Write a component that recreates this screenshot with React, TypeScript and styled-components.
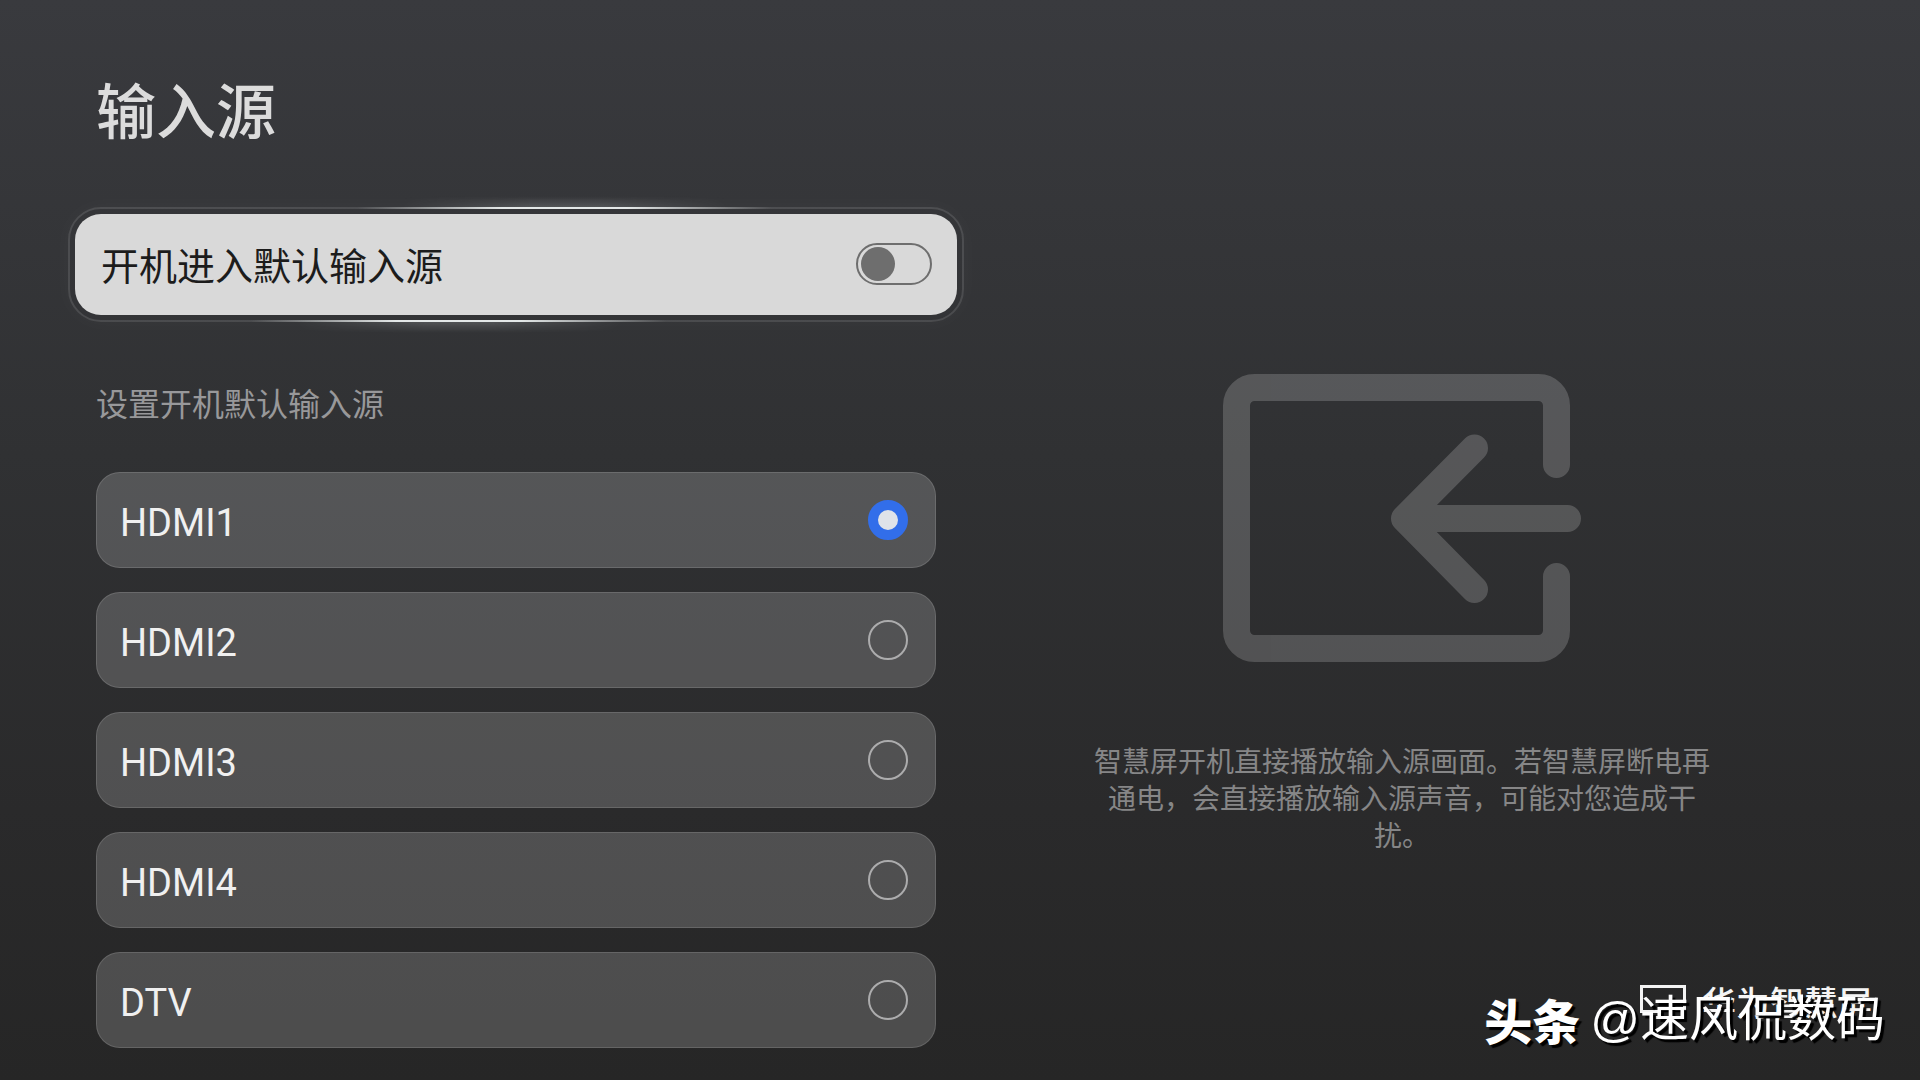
import React, { useState } from "react";
import styled, { createGlobalStyle, css } from "styled-components";

const GlobalStyle = createGlobalStyle`
  *, *::before, *::after { box-sizing: border-box; }
  body {
    margin: 0;
    background: #272727;
    font-family: "Noto Sans CJK SC", "Noto Sans", sans-serif;
  }
`;

const Screen = styled.main`
  position: relative;
  display: grid;
  grid-template-columns: 840fr 932fr;
  min-height: 100vh;
  padding: 68px 52px 32px 96px;
  background: linear-gradient(180deg, #393a3e 0%, #303133 42%, #2a2a2b 75%, #262626 100%);
`;

const Settings = styled.section`
  display: flex;
  flex-direction: column;
`;

const Title = styled.h1`
  margin: 0 0 66px;
  font-size: 60px;
  line-height: 80px;
  font-weight: 500;
  color: #dcdcdc;
`;

const FocusedRow = styled.label`
  position: relative;
  display: flex;
  align-items: center;
  justify-content: space-between;
  height: 101px;
  margin: 0 -21px 63px;
  padding: 0 25px 1px 26px;
  border-radius: 26px;
  background: #d9d9d9;
  color: #1c1c1c;
  font-size: 38px;
  line-height: 56px;

  &::before {
    content: "";
    position: absolute;
    inset: -7px;
    border: 2px solid rgba(255, 255, 255, 0.12);
    border-radius: 33px;
    box-shadow: 0 0 24px rgba(255, 255, 255, 0.03);
  }
`;

const Beam = styled.span<{ $edge: "top" | "bottom" }>`
  position: absolute;
  height: 2px;
  pointer-events: none;
  background: linear-gradient(90deg, transparent, #e4e8e8 35%, #e4e8e8 65%, transparent);
  ${({ $edge }) =>
    $edge === "top"
      ? css`
          top: -7px;
          left: 32%;
          right: 21%;
        `
      : css`
          bottom: -7px;
          left: 20%;
          right: 33%;
        `}

  &::after {
    content: "";
    position: absolute;
    left: 10%;
    right: 10%;
    height: 12px;
    ${({ $edge }) => ($edge === "top" ? "bottom: 1px;" : "top: 1px;")}
    background: linear-gradient(
      ${({ $edge }) => ($edge === "top" ? "0deg" : "180deg")},
      rgba(225, 232, 232, 0.18),
      transparent
    );
    mask-image: linear-gradient(90deg, transparent, #000 40%, #000 60%, transparent);
  }
`;

const Switch = styled.input`
  appearance: none;
  display: flex;
  align-items: center;
  width: 76px;
  height: 42px;
  margin: 0;
  padding: 0 3px;
  border: 2px solid #6e6e6e;
  border-radius: 21px;

  &::before {
    content: "";
    width: 34px;
    height: 34px;
    border-radius: 50%;
    background: #6e6e6e;
  }

  &:checked {
    justify-content: flex-end;
  }
`;

const Sources = styled.fieldset`
  display: flex;
  flex-direction: column;
  gap: 24px;
  min-width: 0;
  margin: 0;
  padding: 0;
  border: 0;
`;

const SourcesLegend = styled.legend`
  margin-bottom: 46px;
  padding: 0;
  font-size: 32px;
  line-height: 48px;
  color: #98989a;
`;

const SourceRow = styled.label`
  display: flex;
  align-items: center;
  justify-content: space-between;
  height: 96px;
  padding: 0 27px 0 23px;
  border: 1px solid rgba(255, 255, 255, 0.13);
  border-radius: 24px;
  background: rgba(255, 255, 255, 0.18);
`;

const SourceName = styled.span`
  padding-top: 6px;
  color: #f0f0f0;
  font-family: Roboto, "Noto Sans CJK SC", sans-serif;
  font-size: 38px;
  line-height: 56px;
`;

const Radio = styled.input`
  appearance: none;
  width: 40px;
  height: 40px;
  margin: 0;
  border: 2px solid #acacad;
  border-radius: 50%;

  &:checked {
    border: 10px solid #326eea;
    background: #dfe3e9;
  }
`;

const Guide = styled.aside`
  display: flex;
  flex-direction: column;
  align-items: center;
  gap: 80px;
  padding-top: 306px;
`;

const GuideText = styled.p`
  max-width: 620px;
  margin: 0;
  font-size: 28px;
  line-height: 37px;
  text-align: center;
  color: #868687;
`;

const Brand = styled.div`
  position: absolute;
  right: 48px;
  bottom: 53px;
  display: flex;
  align-items: center;
  gap: 16px;
  color: #f4f4f4;
  font-size: 34px;
  line-height: 50px;
  font-weight: 500;
`;

const Watermark = styled.div`
  position: absolute;
  right: 35px;
  bottom: 29px;
  display: flex;
  align-items: center;
  gap: 10px;
  color: #fff;
  font-size: 49px;
  line-height: 64px;
  text-shadow: 3px 3px 1px #000;
`;

const WatermarkLogo = styled.strong`
  font-size: 48px;
  font-weight: 900;
`;

const WatermarkName = styled.span`
  font-family: "Liberation Sans", "Noto Sans CJK SC", sans-serif;
`;

const InputIcon = () => (
  <svg width="358" height="288" viewBox="0 0 358 288" fill="none" aria-hidden="true">
    <g
      opacity="0.18"
      stroke="#fff"
      strokeWidth="27"
      strokeLinecap="round"
      strokeLinejoin="round"
    >
      <path d="M333.5 90.5V31.5a18 18 0 0 0-18-18H31.5a18 18 0 0 0-18 18V256.500a18 18 0 0 0 18 18H315.500a18 18 0 0 0 18-18V202.500" />
      <path d="M344.500 144.500H181.500M251.500 74L181.500 144.500L251.500 215.500" />
    </g>
  </svg>
);

const ScreenIcon = () => (
  <svg width="46" height="36" viewBox="0 0 46 36" fill="none" stroke="#f4f4f4" strokeWidth="3" aria-hidden="true">
    <path d="M1.500 2.500H44.500V27.500H1.500ZM11 33.500H35" />
  </svg>
);

const sources = ["HDMI1", "HDMI2", "HDMI3", "HDMI4", "DTV"];

export default function App() {
  const [bootToSource, setBootToSource] = useState(false);
  const [selected, setSelected] = useState("HDMI1");

  return (
    <>
      <GlobalStyle />
      <Screen>
        <Settings>
          <Title>输入源</Title>
          <FocusedRow>
            <Beam $edge="top" />
            <Beam $edge="bottom" />
            开机进入默认输入源
            <Switch
              type="checkbox"
              role="switch"
              checked={bootToSource}
              onChange={(event) => setBootToSource(event.target.checked)}
            />
          </FocusedRow>
          <Sources>
            <SourcesLegend>设置开机默认输入源</SourcesLegend>
            {sources.map((source) => (
              <SourceRow key={source}>
                <SourceName>{source}</SourceName>
                <Radio
                  type="radio"
                  name="source"
                  value={source}
                  checked={selected === source}
                  onChange={() => setSelected(source)}
                />
              </SourceRow>
            ))}
          </Sources>
        </Settings>
        <Guide>
          <InputIcon />
          <GuideText>
            智慧屏开机直接播放输入源画面。若智慧屏断电再通电，会直接播放输入源声音，可能对您造成干扰。
          </GuideText>
        </Guide>
        <Brand>
          <ScreenIcon />
          华为智慧屏
        </Brand>
        <Watermark>
          <WatermarkLogo>头条</WatermarkLogo>
          <WatermarkName>@速风侃数码</WatermarkName>
        </Watermark>
      </Screen>
    </>
  );
}
